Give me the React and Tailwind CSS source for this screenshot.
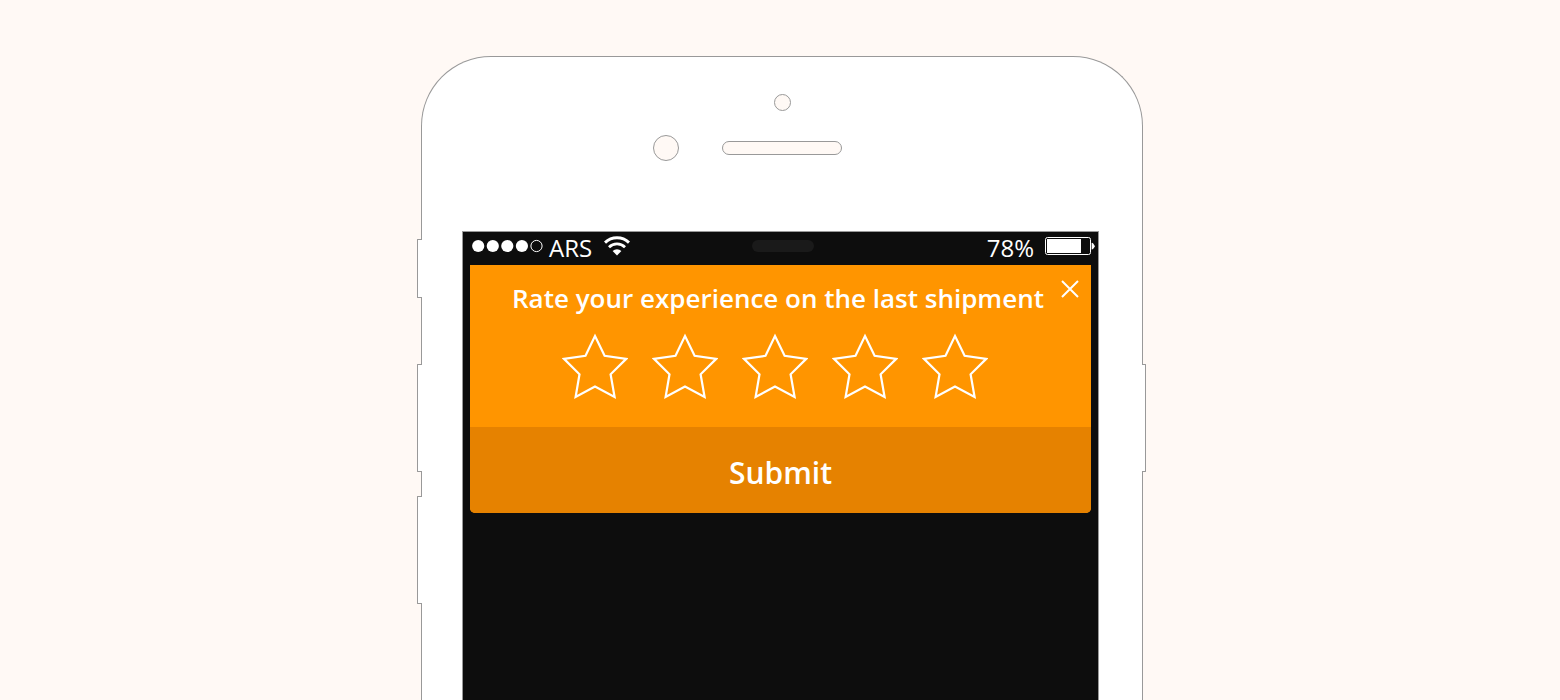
const STARS = [1, 2, 3, 4, 5];

function SideKey({ className }) {
  return <div className={`border border-[#999] bg-white ${className}`} />;
}

function Wifi() {
  return (
    <svg className="ml-3 h-5 w-[26px]" viewBox="0 0 26 20" fill="none" stroke="white" strokeWidth="3" aria-label="Wi-Fi">
      <path d="M1 6.6 A17.5 17.5 0 0 1 25 6.6" />
      <path d="M5 11.2 A11.5 11.5 0 0 1 21 11.2" strokeWidth="2.8" />
      <path d="M8.6 15 A6.5 6.5 0 0 1 17.4 15 L13 19.6 Z" fill="white" stroke="none" />
    </svg>
  );
}

function Battery() {
  return (
    <svg className="ml-2.5 h-5 w-[51px]" viewBox="0 0 51 20" aria-label="Battery">
      <rect x="1.5" y="1.5" width="45" height="17" rx="2" fill="none" stroke="white" />
      <rect x="3" y="3" width="34" height="14" fill="white" />
      <path d="M47.6 7 Q48.6 6.2 51 10.2 Q48.6 14.2 47.6 13.4 Z" fill="white" />
    </svg>
  );
}

function StatusBar() {
  return (
    <div className="grid h-[33px] grid-cols-3 items-start pl-[9px] pr-[3px] pt-1 text-2xl leading-6 text-white">
      <div className="flex items-start">
        <svg className="h-5 w-[72px]" viewBox="0 0 72 20" fill="white" aria-label="Signal">
          <circle cx="6.2" cy="10" r="6.1" />
          <circle cx="20.8" cy="10" r="6.1" />
          <circle cx="35.3" cy="10" r="6.1" />
          <circle cx="49.9" cy="10" r="6.1" />
          <circle cx="64.5" cy="10" r="5.6" fill="none" stroke="white" />
        </svg>
        <span className="ml-[5px]">ARS</span>
        <Wifi />
      </div>
      <div className="mx-auto mt-1 h-3 w-[62px] rounded-full bg-[#1a1a1a]" />
      <div className="flex items-start justify-end">
        <span>78%</span>
        <Battery />
      </div>
    </div>
  );
}

function Star({ value }) {
  return (
    <label className="grid cursor-pointer">
      <input
        type="radio"
        name="rating"
        value={value}
        aria-label={`${value} stars`}
        className="col-start-1 row-start-1 size-full cursor-pointer appearance-none"
      />
      <svg
        className="col-start-1 row-start-1 h-[67px] w-[66px]"
        viewBox="0 0 66 67"
        fill="none"
        stroke="white"
        strokeWidth="2.2"
      >
        <path d="M33 3 L42.6 22.8 L64.2 25.9 L48.6 41.3 L52.6 64 L33 53.6 L13.6 64 L17.5 41.3 L2 25.9 L23.5 22.8 Z" />
      </svg>
    </label>
  );
}

function RatingCard() {
  return (
    <form className="mx-[7px] overflow-hidden rounded-b-[5px] bg-[#ff9500] text-white" onSubmit={(e) => e.preventDefault()}>
      <div className="flex items-start pl-[42px] pr-3 pt-[15px]">
        <h1 className="flex-1 whitespace-nowrap text-[26px] font-semibold leading-9">
          Rate your experience on the last shipment
        </h1>
        <button type="button" aria-label="Close" className="size-[18px]">
          <svg className="size-[18px]" viewBox="0 0 18 18" stroke="white" strokeWidth="2">
            <path d="M1 1 L17 17 M17 1 L1 17" />
          </svg>
        </button>
      </div>
      <div className="flex justify-center gap-6 pb-[27px] pr-3 pt-[17px]">
        {STARS.map((n) => (
          <Star key={n} value={n} />
        ))}
      </div>
      <button type="submit" className="block w-full bg-[#e68200] pb-5 pt-[26px] text-[30px] font-semibold leading-10">
        Submit
      </button>
    </form>
  );
}

export default function App() {
  return (
    <main className="flex h-screen justify-center overflow-hidden bg-[#fff9f5] pl-[3px] pt-14 font-['Open_Sans','Noto_Sans',sans-serif]">
      <div className="z-10 flex w-1 flex-col pt-[183px]">
        <SideKey className="h-[59px] w-[5px] shrink-0 rounded-l-[1px] border-r-0" />
        <SideKey className="mt-[66px] h-[108px] w-[5px] shrink-0 rounded-l-[1px] border-r-0" />
        <SideKey className="mt-6 h-[108px] w-[5px] shrink-0 rounded-l-[1px] border-r-0" />
      </div>
      <div className="flex w-full max-w-[722px] flex-col rounded-t-[70px] border border-b-0 border-[#999] bg-white pl-10 pr-[43px] pt-[37px]">
        <div className="ml-[3px] flex justify-center">
          <div className="size-[17px] rounded-full border border-[#999] bg-[#fff9f5]" />
        </div>
        <div className="mt-6 ml-[3px] grid grid-cols-[1fr_120px_1fr] items-center">
          <div className="mr-[43px] size-[26px] justify-self-end rounded-full border border-[#999] bg-[#fff9f5]" />
          <div className="h-[14px] rounded-full border border-[#999] bg-[#fff9f5]" />
        </div>
        <div className="mt-[70px] flex-1 border border-b-0 border-[#999] bg-[#0d0d0d]">
          <StatusBar />
          <RatingCard />
        </div>
      </div>
      <div className="z-10 flex w-[3px] flex-col items-end pt-[308px]">
        <SideKey className="h-[108px] w-1 rounded-r-[1px] border-l-0" />
      </div>
    </main>
  );
}
